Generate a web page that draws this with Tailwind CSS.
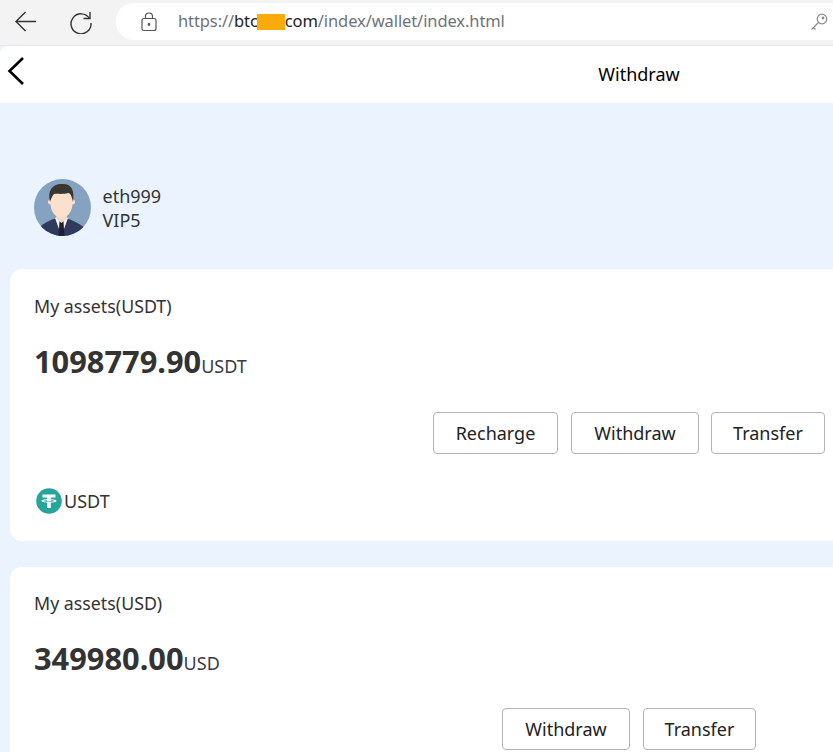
<!doctype html>
<html><head><meta charset="utf-8"><script src="https://cdn.jsdelivr.net/npm/@tailwindcss/browser@4"></script></head>
<body class="m-0 bg-[#ebf3ff]">
<div class="w-[833px] h-[752px] overflow-hidden bg-[#ebf3ff] font-['Noto_Sans','Open_Sans',sans-serif] text-[#333]">
  <div class="h-[46px] bg-[#f3f3f3] flex items-start border-b border-[#e6e6e6]">
    <div class="w-[52px] h-[43px] flex items-center justify-center">
      <svg width="24" height="24" viewBox="0 0 24 24" fill="none" stroke="#333" stroke-width="1.4"><path d="M2 11.500H22M11.500 2L2 11.500L11.500 21"/></svg>
    </div>
    <div class="w-[58px] h-[43px] flex items-center justify-center">
      <svg width="24" height="24" viewBox="0 0 24 24" fill="none" stroke="#333" stroke-width="1.4"><path d="M20.500 8.500A10 10 0 1 0 22 13"/><path d="M21 2V8.500H14.500"/></svg>
    </div>
    <div class="ml-[6px] mt-[3px] flex-1 h-[37px] bg-white rounded-l-[18px] flex items-center">
      <svg class="ml-[25px]" width="16" height="20" viewBox="0 0 16 20" fill="none" stroke="#555" stroke-width="1.2"><rect x="1" y="6.500" width="14" height="12" rx="2"/><path d="M4.500 6.500V4.500a3.500 3.500 0 0 1 7 0v2"/><circle cx="8" cy="12.500" r="0.800" fill="#555"/></svg>
      <div class="ml-[21px] text-[16.500px] leading-none text-[#6f7377] whitespace-nowrap flex items-center tracking-[-0.1px]"><span>https://</span><span class="text-[#222]">btc</span><span class="w-[28px] h-[16px] bg-[#f9ab0a] -ml-[1px]"></span><span class="text-[#222]">com</span><span>/index/wallet/index.html</span></div>
      <svg class="ml-auto mr-[5px]" width="18" height="18" viewBox="0 0 18 18" fill="none" stroke="#8a8a8a" stroke-width="1.2"><circle cx="12" cy="6" r="4.800"/><circle cx="13" cy="5" r="0.800"/><path d="M8.500 9.500L1.500 16.500M3.500 14.500L5.500 16.500"/></svg>
    </div>
  </div>
  <div class="h-[57px] bg-white rounded-tl-[8px] relative flex items-center justify-center pl-[445px]">
    <span class="text-[18px] text-black">Withdraw</span>
    <svg class="absolute left-[7px] top-[10px]" width="18" height="30" viewBox="0 0 18 30" fill="none" stroke="#000" stroke-width="2.600"><path d="M16 2L2.500 15L16 28"/></svg>
  </div>
  <div class="pt-[76px] pl-[34px] flex items-start gap-[12px] h-[166px]">
    <svg class="rounded-full shrink-0" width="57" height="57" viewBox="0 0 57 57">
      <rect width="57" height="57" fill="#85a3c1"/>
      <path d="M4 50C10 43 18 40 27 38C36 40 44 43 52 50L50 57H7Z" fill="#2f3a5c"/>
      <path d="M21 39L27.500 57L34 39L27.500 36Z" fill="#f4f4f6"/>
      <path d="M25.500 42H29.500L30.500 57H24.500Z" fill="#1b2036"/>
      <path d="M22.500 33H32.500V40L27.500 44L22.500 40Z" fill="#f5d9c5"/>
      <circle cx="16.500" cy="23" r="2.500" fill="#fde0cc"/><circle cx="38.500" cy="23" r="2.500" fill="#fde0cc"/>
      <ellipse cx="27.500" cy="24" rx="11" ry="15" fill="#fde0cc"/>
      <path d="M16 23C13 11 19 4.500 28 5C37 4 41 11 39 23C38 18 37 14 34 14C30 15.500 23 14.500 20 15C18 17 17 20 16 23Z" fill="#3a3733"/>
    </svg>
    <div class="text-[18px] leading-[24px] text-[#333] mt-[5px] -ml-[0.5px]"><div>eth999</div><div>VIP5</div></div>
  </div>
  <section class="ml-[10px] h-[272px] bg-white rounded-l-[12px] pl-[24px] pt-[25px] relative">
    <div class="text-[17.800px] leading-[24px]">My assets(USDT)</div>
    <div class="mt-[20px] flex items-baseline leading-[46px]"><span class="text-[30.800px] font-bold">1098779.90</span><span class="text-[18px] text-[#3a3a45]">USDT</span></div>
    <div class="mt-[23px] flex justify-end gap-[12px] pr-[8px]">
      <button class="w-[125px] h-[42px] mr-[1px] border border-[#b3b3b3] rounded-[4px] bg-white text-[18px] text-[#222]">Recharge</button>
      <button class="w-[128px] h-[42px] border border-[#b3b3b3] rounded-[4px] bg-white text-[18px] text-[#222]">Withdraw</button>
      <button class="w-[114px] h-[42px] border border-[#b3b3b3] rounded-[4px] bg-white text-[18px] text-[#222]">Transfer</button>
    </div>
    <div class="mt-[33px] flex items-center h-[28px] ml-[2px] gap-[2px]">
      <svg width="26" height="26" viewBox="0 0 26 26"><circle cx="13" cy="13" r="12.800" fill="#26a69a"/><path fill="#fff" d="M6.500 6.500H19.500V9.500H14.800V11.300C17.500 11.500 20.500 12 20.500 13C20.500 14 17.500 14.500 14.800 14.700V20H11.200V14.700C8.500 14.500 5.500 14 5.500 13C5.500 12 8.500 11.500 11.200 11.300V9.500H6.500ZM11.200 12.200C9.200 12.300 7.500 12.600 7.500 13C7.500 13.400 10 13.800 13 13.800C16 13.800 18.500 13.400 18.500 13C18.500 12.600 16.800 12.300 14.800 12.200V13.200H11.200Z"/></svg>
      <span class="text-[18px]">USDT</span>
    </div>
  </section>
  <section class="ml-[10px] mt-[26px] h-[260px] bg-white rounded-l-[12px] pl-[24px] pt-[24px]">
    <div class="text-[17.800px] leading-[24px]">My assets(USD)</div>
    <div class="mt-[20px] flex items-baseline leading-[46px]"><span class="text-[30.800px] font-bold">349980.00</span><span class="text-[18px] text-[#3a3a45]">USD</span></div>
    <div class="mt-[22px] flex gap-[13px] pl-[468px]">
      <button class="w-[128px] h-[42px] shrink-0 border border-[#b3b3b3] rounded-[4px] bg-white text-[18px] text-[#222]">Withdraw</button>
      <button class="w-[113px] h-[42px] shrink-0 border border-[#b3b3b3] rounded-[4px] bg-white text-[18px] text-[#222]">Transfer</button>
    </div>
  </section>
</div>
</body></html>
